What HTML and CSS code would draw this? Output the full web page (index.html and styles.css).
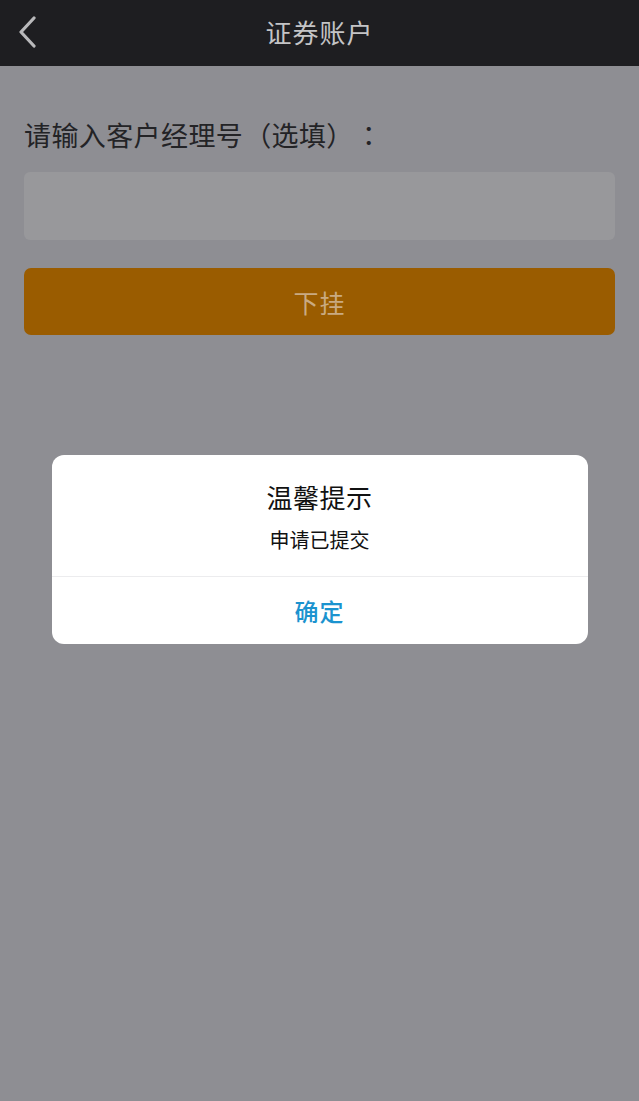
FILE: index.html
```html
<!DOCTYPE html>
<html lang="zh-CN">
<head>
<meta charset="utf-8">
<title>证券账户</title>
<link rel="stylesheet" href="styles.css">
</head>
<body>
<div class="app">
  <header class="topbar">
    <span class="back" aria-label="返回">
      <svg width="22" height="32" viewBox="0 0 22 32"><path d="M18 2 L5 16 L18 30" fill="none" stroke="#b9b9bb" stroke-width="3.2" stroke-linecap="round" stroke-linejoin="round"/></svg>
    </span>
    <h1 class="title">证券账户</h1>
  </header>
  <main class="content">
    <label class="label">请输入客户经理号<span class="pl">（</span>选填<span class="pr">）</span><span class="colon">：</span></label>
    <div class="input"></div>
    <div class="btn">下挂</div>
  </main>
  <div class="mask">
    <div class="dialog">
      <div class="dialog-body">
        <div class="dialog-title">温馨提示</div>
        <div class="dialog-msg">申请已提交</div>
      </div>
      <div class="dialog-action">确定</div>
    </div>
  </div>
</div>
</body>
</html>
```
FILE: styles.css
```css
* { box-sizing: border-box; margin: 0; padding: 0; }
html, body { height: 100%; }
body {
  font-family: "Noto Sans CJK SC", "Noto Sans", sans-serif;
  background: #8e8e93;
}
.app { position: relative; min-height: 100vh; background: #8e8e93; }
.topbar {
  height: 66px;
  background: #1e1e21;
  display: flex;
  align-items: center;
  justify-content: center;
  position: relative;
}
.back {
  position: absolute;
  left: 16px;
  top: 16px;
  width: 22px;
  height: 32px;
  display: flex;
}
.title {
  font-size: 26px;
  font-weight: 400;
  color: #c4c4c6;
  letter-spacing: 1px;
  line-height: 1;
  margin-top: -2px;
}
.content {
  padding: 0 24px;
  display: flex;
  flex-direction: column;
}
.label {
  margin-top: 52px;
  font-size: 27px;
  line-height: 34px;
  color: #232326;
  letter-spacing: 0.4px;
  white-space: nowrap;
}
.pl, .pr, .colon {
  display: inline-block;
  width: 1.05em;
}
.pl { text-align: right; }
.pr { text-align: left; }
.colon {
  text-align: center;
  font-family: "Noto Sans CJK TC", "Noto Sans CJK SC", sans-serif;
}
.input {
  margin-top: 20px;
  height: 68px;
  background: #98989b;
  border-radius: 6px;
}
.btn {
  margin-top: 28px;
  height: 67px;
  background: #9a5c00;
  border-radius: 7px;
  display: flex;
  align-items: center;
  justify-content: center;
  font-size: 25px;
  color: #c9aa82;
  letter-spacing: 1px;
}
.mask {
  position: absolute;
  left: 0; right: 0; top: 0; bottom: 0;
  display: flex;
  justify-content: center;
  padding-top: 455px;
}
.dialog {
  width: 536px;
  height: 189px;
  background: #ffffff;
  border-radius: 12px;
  display: flex;
  flex-direction: column;
  overflow: hidden;
}
.dialog-body {
  height: 122px;
  display: flex;
  flex-direction: column;
  align-items: center;
  padding-top: 25px;
  border-bottom: 1px solid #ececee;
}
.dialog-title {
  font-size: 26px;
  line-height: 34px;
  color: #111;
  letter-spacing: 0.5px;
}
.dialog-msg {
  margin-top: 12px;
  font-size: 20px;
  line-height: 28px;
  color: #111;
}
.dialog-action {
  flex: 1;
  display: flex;
  align-items: center;
  justify-content: center;
  font-size: 24px;
  font-weight: 500;
  color: #1b93cf;
  letter-spacing: 1px;
}
```
